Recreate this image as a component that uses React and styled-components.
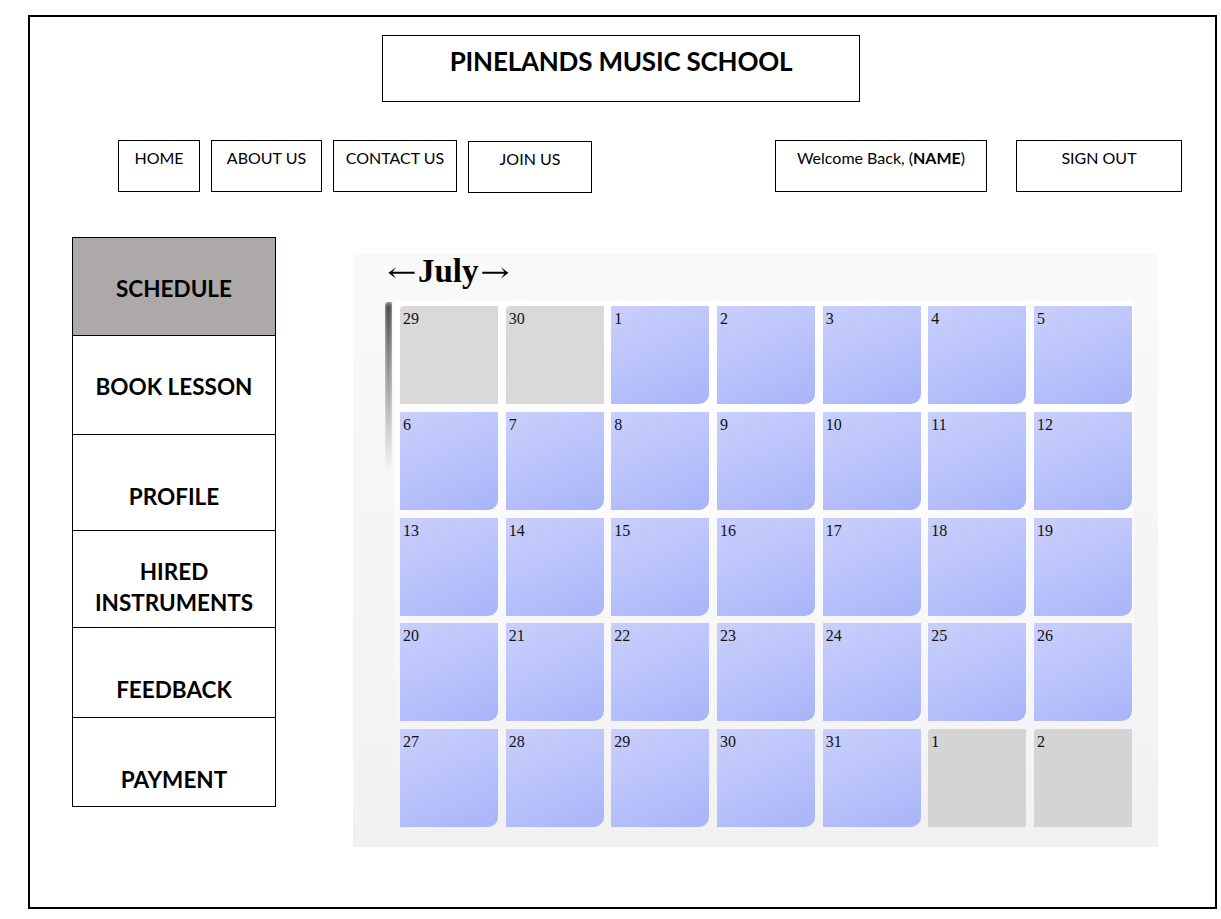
import React from "react";
import styled, { createGlobalStyle } from "styled-components";

const Global = createGlobalStyle`
  html, body { margin: 0; padding: 0; background: #fff; }
  body { font-family: Lato, "Open Sans", Arial, sans-serif; color: #000; }
  * { box-sizing: border-box; }
`;

const Frame = styled.div`
  margin: 15px 0 0 28px;
  width: 1189px;
  height: 894px;
  border: 2px solid #000;
  display: flex;
  flex-direction: column;
`;

const TitleBox = styled.div`
  margin: 18px 0 0 352px;
  width: 478px;
  height: 67px;
  border: 1px solid #000;
  text-align: center;
  padding-top: 8px;
  font-size: 26px;
  line-height: 34px;
  font-weight: 700;
  letter-spacing: -0.2px;
`;

const NavRow = styled.div`
  margin-top: 38px;
  display: flex;
  justify-content: space-between;
  padding: 0 33px 0 88px;
`;

const NavGroup = styled.div`
  display: flex;
  align-items: flex-start;
  gap: ${(p) => p.$gap}px;
`;

const NavBox = styled.div`
  width: ${(p) => p.$w}px;
  height: 52px;
  margin-top: ${(p) => p.$shift || 0}px;
  border: 1px solid #000;
  text-align: center;
  padding-top: 7px;
  font-size: 16px;
  line-height: 20px;
  b { font-weight: 700; }
`;

const Main = styled.div`
  margin-top: 44px;
  display: flex;
  align-items: flex-start;
  padding-left: 42px;
  gap: 77px;
`;

const Sidebar = styled.div`
  width: 204px;
  border: 1px solid #000;
  border-bottom: none;
  display: flex;
  flex-direction: column;
`;

const SideItem = styled.div`
  height: ${(p) => p.$h}px;
  border-bottom: 1px solid #000;
  background: ${(p) => (p.$active ? "#ada9a8" : "#fff")};
  padding-top: ${(p) => p.$pt}px;
  text-align: center;
  font-size: 22.5px;
  line-height: 31px;
  font-weight: 700;
`;

const Panel = styled.div`
  margin-top: 16px;
  width: 805px;
  height: 594px;
  background: linear-gradient(to bottom, #f9f9f9 0%, #f4f4f4 60%, #f1f1f1 100%);
  display: flex;
  flex-direction: column;
`;

const MonthTitle = styled.div`
  height: 48px;
  padding: 0 0 0 33px;
  font-family: "Liberation Serif", "Times New Roman", serif;
  font-size: 33px;
  line-height: 36px;
  font-weight: 700;
  white-space: nowrap;
`;

const Arrow = styled.span`
  display: inline-block;
  width: 32px;
  text-align: center;
  font-weight: 400;
  font-family: "DejaVu Serif", "Liberation Serif", serif;
  font-size: 26px;
  transform: scaleX(1.35);
  vertical-align: 1px;
`;

const GridWrap = styled.div`
  position: relative;
  margin-left: 41px;
  width: 740px;
  padding: 5px 0 0 6px;
  background: linear-gradient(to bottom, #ffffff 0%, rgba(255,255,255,0.4) 60%, rgba(255,255,255,0) 100%);
  &::before {
    content: "";
    position: absolute;
    left: -9px;
    top: 1px;
    width: 7px;
    height: 170px;
    border-radius: 3px 0 0 0;
    background: rgba(0, 0, 0, 0.85);
    filter: blur(2.5px);
    -webkit-mask-image: linear-gradient(to bottom, #000 0%, rgba(0,0,0,0.65) 30%, transparent 100%);
    mask-image: linear-gradient(to bottom, #000 0%, rgba(0,0,0,0.65) 30%, transparent 100%);
  }
`;

const Grid = styled.div`
  position: relative;
  display: grid;
  grid-template-columns: repeat(7, 98px);
  grid-auto-rows: 98px;
  column-gap: 7.67px;
  row-gap: 7.75px;
`;

const Cell = styled.div`
  padding: 4px 3px;
  font-family: "Liberation Serif", "Times New Roman", serif;
  font-size: 16px;
  line-height: 18px;
  color: #111;
  background: ${(p) =>
    p.$muted
      ? p.$shade
      : "linear-gradient(155deg, #c9cffc 0%, #bcc4fb 45%, #a8b4f8 100%)"};
  border-radius: ${(p) => (p.$muted ? "4px 0 0 0" : "0 0 10px 0")};
`;

const weeks = [
  [29, 30, 1, 2, 3, 4, 5],
  [6, 7, 8, 9, 10, 11, 12],
  [13, 14, 15, 16, 17, 18, 19],
  [20, 21, 22, 23, 24, 25, 26],
  [27, 28, 29, 30, 31, 1, 2],
];

const sideItems = [
  { label: "SCHEDULE", h: 98, pt: 35, active: true },
  { label: "BOOK LESSON", h: 99, pt: 35 },
  { label: "PROFILE", h: 96, pt: 46 },
  { label: ["HIRED", "INSTRUMENTS"], h: 97, pt: 25 },
  { label: "FEEDBACK", h: 90, pt: 46 },
  { label: "PAYMENT", h: 89, pt: 46 },
];

export default function App() {
  return (
    <>
      <Global />
      <Frame>
        <TitleBox>PINELANDS MUSIC SCHOOL</TitleBox>
        <NavRow>
          <NavGroup $gap={11}>
            <NavBox $w={82}>HOME</NavBox>
            <NavBox $w={111}>ABOUT US</NavBox>
            <NavBox $w={124}>CONTACT US</NavBox>
            <NavBox $w={124} $shift={1}>JOIN US</NavBox>
          </NavGroup>
          <NavGroup $gap={29}>
            <NavBox $w={212}>
              Welcome Back, (<b>NAME</b>)
            </NavBox>
            <NavBox $w={166}>SIGN OUT</NavBox>
          </NavGroup>
        </NavRow>
        <Main>
          <Sidebar>
            {sideItems.map((it, i) => (
              <SideItem key={i} $h={it.h} $pt={it.pt} $active={it.active}>
                {Array.isArray(it.label)
                  ? it.label.map((l) => <div key={l}>{l}</div>)
                  : it.label}
              </SideItem>
            ))}
          </Sidebar>
          <Panel>
            <MonthTitle>
              <Arrow>←</Arrow>July<Arrow>→</Arrow>
            </MonthTitle>
            <GridWrap>
              <Grid>
                {weeks.map((w, wi) =>
                  w.map((d, di) => {
                    const muted = (wi === 0 && d > 20) || (wi === 4 && d < 10);
                    return (
                      <Cell
                        key={`${wi}-${di}`}
                        $muted={muted}
                        $shade={wi === 0 ? "#d9d9d9" : "#d4d4d4"}
                      >
                        {d}
                      </Cell>
                    );
                  })
                )}
              </Grid>
            </GridWrap>
          </Panel>
        </Main>
      </Frame>
    </>
  );
}
